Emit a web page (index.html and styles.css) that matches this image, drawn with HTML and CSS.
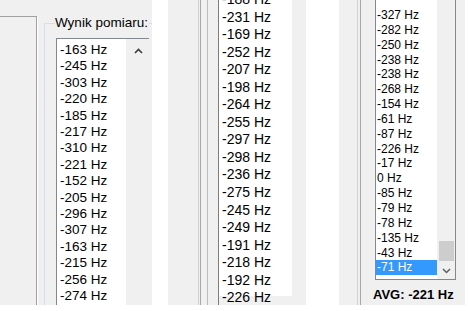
FILE: index.html
```html
<!DOCTYPE html>
<html lang="pl">
  <head>
    <meta charset="UTF-8" />
    <meta name="viewport" content="width=device-width, initial-scale=1.0" />
    <title>Wynik pomiaru</title>
    <link rel="stylesheet" href="styles.css">
  </head>
  <body>
    <div class="shots">
      <section class="shot shot-one">
        <div class="frame"></div>
        <fieldset class="group">
          <legend>Wynik pomiaru:</legend>
          <div class="listbox">
            <ul class="items">
              <li>-163 Hz</li>
              <li>-245 Hz</li>
              <li>-303 Hz</li>
              <li>-220 Hz</li>
              <li>-185 Hz</li>
              <li>-217 Hz</li>
              <li>-310 Hz</li>
              <li>-221 Hz</li>
              <li>-152 Hz</li>
              <li>-205 Hz</li>
              <li>-296 Hz</li>
              <li>-307 Hz</li>
              <li>-163 Hz</li>
              <li>-215 Hz</li>
              <li>-256 Hz</li>
              <li>-274 Hz</li>
            </ul>
            <div class="scroll">
              <svg class="arrow" width="9" height="6" viewBox="0 0 9 6">
                <polyline points="1,5 4.5,1.5 8,5" fill="none" stroke="#3c3c3c" stroke-width="1.6" />
              </svg>
            </div>
          </div>
        </fieldset>
      </section>

      <section class="shot shot-two">
        <div class="edge"></div>
        <div class="edge single"></div>
        <div class="listbox">
          <ul class="items">
            <li>-188 Hz</li>
            <li>-231 Hz</li>
            <li>-169 Hz</li>
            <li>-252 Hz</li>
            <li>-207 Hz</li>
            <li>-198 Hz</li>
            <li>-264 Hz</li>
            <li>-255 Hz</li>
            <li>-297 Hz</li>
            <li>-298 Hz</li>
            <li>-236 Hz</li>
            <li>-275 Hz</li>
            <li>-245 Hz</li>
            <li>-249 Hz</li>
            <li>-191 Hz</li>
            <li>-218 Hz</li>
            <li>-192 Hz</li>
            <li>-226 Hz</li>
          </ul>
        </div>
      </section>

      <section class="shot shot-three">
        <div class="edge"></div>
        <div class="col">
          <div class="listbox">
            <ul class="items">
              <li>-327 Hz</li>
              <li>-282 Hz</li>
              <li>-250 Hz</li>
              <li>-238 Hz</li>
              <li>-238 Hz</li>
              <li>-268 Hz</li>
              <li>-154 Hz</li>
              <li>-61 Hz</li>
              <li>-87 Hz</li>
              <li>-226 Hz</li>
              <li>-17 Hz</li>
              <li>0 Hz</li>
              <li>-85 Hz</li>
              <li>-79 Hz</li>
              <li>-78 Hz</li>
              <li>-135 Hz</li>
              <li>-43 Hz</li>
              <li class="selected">-71 Hz</li>
            </ul>
            <div class="scroll">
              <span class="thumb"></span>
              <svg class="arrow" width="9" height="6" viewBox="0 0 9 6">
                <polyline points="1,1 4.5,4.5 8,1" fill="none" stroke="#606060" stroke-width="1.5" />
              </svg>
            </div>
          </div>
          <p class="avg">AVG: -221 Hz</p>
        </div>
      </section>
    </div>
  </body>
</html>
```

FILE: styles.css
```css
* {
  margin: 0;
  padding: 0;
  box-sizing: border-box;
}

body {
  background: #fff;
  font-family: "Liberation Sans", Arial, sans-serif;
  color: #000;
}

.shots {
  display: flex;
  align-items: flex-start;

  > .shot {
    height: 305px;
    overflow: hidden;
    background: #f0f0f0;
    display: flex;
    align-items: flex-start;
    flex-shrink: 0;
  }

  & .items {
    list-style: none;
    background: #fff;

    > li {
      white-space: nowrap;
    }
  }
}

/* first cut: group box with the list */
.shot-one {
  width: 152px;

  > .frame {
    width: 37px;
    height: 300px;
    margin-top: 16px;
    border-top: 1px solid #a0a0a0;
    border-right: 1px solid #a0a0a0;
    box-shadow: 1px 1px 0 #fff;
    flex-shrink: 0;
  }

  > .group {
    flex-shrink: 0;
    width: 130px;
    height: 320px;
    margin: 15px 0 0 7px;
    padding: 0 0 0 11px;
    border: 1px solid #d5dfe5;

    > legend {
      margin-left: -1px;
      padding: 0 1px 0 0;
      font-size: 13.5px;
      line-height: 16px;
    }
  }

  & .listbox {
    display: flex;
    margin-top: 7px;
    width: 93px;
    border-top: 1px solid #828790;
    border-left: 1px solid #828790;
  }

  & .items {
    width: 69px;
    padding: 3px 0 0 3px;
    font-size: 13.5px;
    line-height: 16.4px;
  }

  & .scroll {
    width: 23px;
    display: flex;
    justify-content: center;
    padding-top: 9px;

    > .arrow {
      margin-left: 1px;
    }
  }
}

/* second cut: middle of the list */
.shot-two {
  width: 138px;
  margin-left: 16px;
  padding-left: 30px;

  > .edge {
    width: 3px;
    height: 305px;
    border-left: 1px solid #d2d2d2;
    border-right: 1px solid #a8a8a8;
    flex-shrink: 0;
  }

  > .edge.single {
    width: 1px;
    margin-left: 6px;
    border-right: 0;
    border-left-color: #bcbcbc;
  }

  > .listbox {
    margin-left: 10px;
    height: 305px;
    border-left: 1px solid #7d7d7d;
    flex-shrink: 0;
  }

  & .items {
    width: 73px;
    height: 305px;
    margin-top: -9px;
    padding-left: 3px;
    font-size: 14px;
    line-height: 17.55px;
  }
}

/* third cut: end of the list with the average */
.shot-three {
  width: 126px;
  margin-left: 33px;
  padding-left: 18px;

  > .edge {
    width: 4px;
    height: 305px;
    border-left: 1px solid #d2d2d2;
    border-right: 1px solid #a8a8a8;
    flex-shrink: 0;
  }

  > .col {
    margin-left: 14px;
    flex-shrink: 0;
  }

  & .listbox {
    display: flex;
    height: 280px;
    border-left: 1px solid #828790;
    border-bottom: 1px solid #828790;
    border-right: 1px solid #828790;
    overflow: hidden;
  }

  & .items {
    width: 61px;
    padding: 8px 0 0 1px;
    font-size: 12px;
    line-height: 14.85px;

    > .selected {
      background: #3399ff;
      color: #fff;
      margin-left: -1px;
      padding-left: 1px;
    }
  }

  & .scroll {
    width: 18px;
    background: #f0f0f0;
    display: flex;
    flex-direction: column;
    align-items: center;
    justify-content: flex-end;
    padding-bottom: 5px;

    > .thumb {
      width: 15px;
      height: 20px;
      background: #cdcdcd;
      margin-bottom: 7px;
    }
  }

  & .avg {
    margin: 7px 0 0 -2px;
    font-size: 13px;
    font-weight: bold;
    line-height: 15px;
  }
}
```
